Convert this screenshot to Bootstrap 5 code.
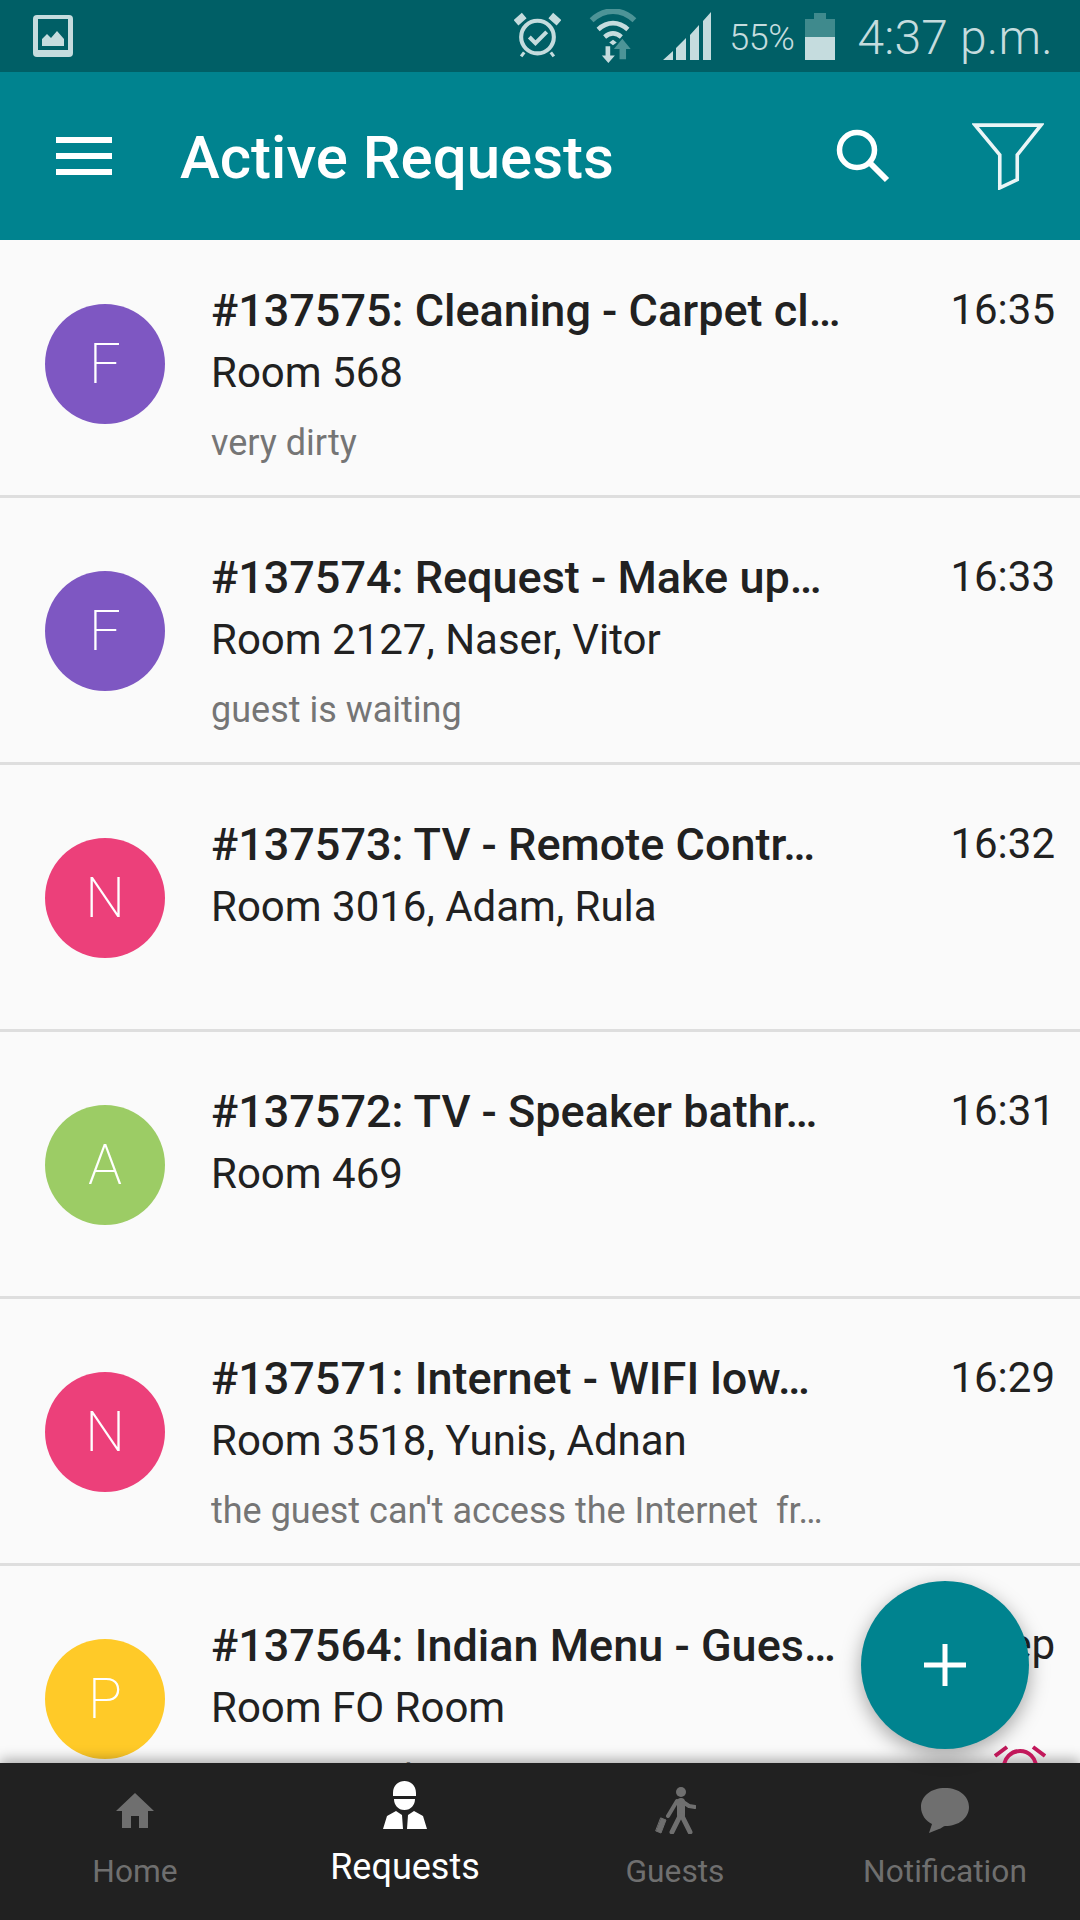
<!DOCTYPE html>
<html lang="en">
<head>
  <meta charset="UTF-8" />
  <meta name="viewport" content="width=device-width, initial-scale=1" />
  <title>Active Requests</title>
  <link href="https://cdn.jsdelivr.net/npm/bootstrap@5.3.0/dist/css/bootstrap.min.css" rel="stylesheet" />
  <style>
    body {
      font-family: Roboto, "Liberation Sans", sans-serif;
      background: #fafafa;
    }

    .phone {
      height: 1920px;
      overflow: hidden;
      position: relative;
    }

    .status-bar {
      height: 72px;
      background: #005f66;
      color: #c5dcde;
      padding: 0 27px 0 33px;
    }

    .status-wifi { margin-left: 27px; }
    .status-signal { margin-left: 25px; }
    .status-pct { font-size: 36px; font-weight: 300; margin: 3px 0 0 18px; letter-spacing: -.5px; line-height: 1; }
    .status-batt { margin-left: 11px; }
    .status-time { font-size: 48px; font-weight: 300; margin: 3px 0 0 22px; letter-spacing: .2px; line-height: 1; }

    .app-bar {
      height: 168px;
      background: #00838f;
      color: #fff;
      padding: 0 36px 0 56px;
    }

    .app-title {
      font-size: 60px;
      font-weight: 500;
      margin: 4px 0 0 68px;
      line-height: 1;
    }

    .app-filter { margin-left: 82px; }

    .burger { width: 56px; height: 38px; }
    .burger span { display: block; height: 6px; background: #fff; margin-bottom: 10px; }

    .req-list {
      --bs-list-group-bg: #fafafa;
      --bs-list-group-border-color: #dedede;
      --bs-list-group-border-width: 3px;
      --bs-list-group-item-padding-x: 0;
      --bs-list-group-item-padding-y: 0;
      flex: 1 1 0;
      min-height: 0;
      overflow: hidden;
    }

    .req-row {
      height: 267px;
      flex: none;
      padding: 9px 25px 0 45px !important;
    }

    .req-row:first-child {
      height: 258px;
      padding-top: 0 !important;
    }

    .avatar {
      width: 120px;
      height: 120px;
      margin-top: 64px;
      font-size: 56px;
      font-weight: 200;
      color: #fff;
    }

    .req-body { width: 640px; margin-left: 46px; padding-top: 45px; }
    .req-title, .req-room, .req-note { white-space: pre; overflow: hidden; }
    .req-title { font-size: 45px; font-weight: 500; color: #212121; line-height: 52px; }
    .req-room { font-size: 42px; color: #212121; line-height: 52px; margin-top: 10px; }
    .req-note { font-size: 36px; color: #757575; line-height: 44px; margin-top: 22px; height: 44px; }
    .req-time { font-size: 42px; color: #212121; line-height: 52px; margin-top: 44px; margin-left: auto; }

    .bg-purple { background: #7e57c2; }
    .bg-pink { background: #ec407a; }
    .bg-green { background: #9ccc65; }
    .bg-amber { background: #ffca28; }

    .tab-bar {
      height: 157px;
      background: #212121;
      box-shadow: 0 -4px 12px rgba(0, 0, 0, .3);
      position: relative;
    }

    .tab-item {
      width: 270px;
      color: #6f6f6f;
      font-size: 31.700px;
      height: 157px;
    }

    .tab-icon { height: 70px; margin-top: 12px; }
    .tab-text { margin-top: 6px; line-height: 42px; }
    .tab-item.is-active { color: #fff; font-size: 36px; }
    .tab-item.is-active .tab-icon { height: 60px; }
    .tab-item.is-active .tab-text { margin-top: 11px; }

    .fab {
      position: absolute;
      left: 861px;
      top: 1581px;
      width: 168px;
      height: 168px;
      background: #00838f;
      box-shadow: 0 6px 20px rgba(0, 0, 0, .35);
    }

    .alarm-mark {
      position: absolute;
      left: 994px;
      top: 1745px;
    }
  </style>
</head>
<body>
  <div class="phone d-flex flex-column">
    <!-- status bar -->
    <div class="status-bar d-flex align-items-center flex-shrink-0">
      <svg width="40" height="42" viewBox="0 0 40 42">
        <rect width="40" height="42" rx="4" fill="#c5dcde"/>
        <rect x="5" y="4" width="30" height="31" fill="#005f66"/>
        <path d="M9 31v-7l5-5 4 4 6-7 7 8v7z" fill="#c5dcde"/>
      </svg>
      <div class="ms-auto d-flex align-items-center">
        <svg width="47" height="48" viewBox="2 2 46 46" fill="none" stroke="#c5dcde">
          <circle cx="25" cy="26" r="16" stroke-width="4"/>
          <path d="M17 26l6 6 11-11" stroke-width="4"/>
          <path d="M4 12l8-7M46 12l-8-7" stroke-width="7"/>
          <path d="M12 41l-3 4M38 41l3 4" stroke-width="3"/>
        </svg>
        <svg class="status-wifi" width="50" height="54" viewBox="0 0 52 58" fill="none">
          <path d="M3 12c14-13 32-13 46 0" stroke="#4d9497" stroke-width="6"/>
          <path d="M10 22c10-9 22-9 32 0M17 30c6-5 12-5 18 0" stroke="#c5dcde" stroke-width="5"/>
          <path d="M22 36l4-3 4 3-4 3z" fill="#c5dcde"/>
          <path d="M18 40h5v10h5l-7 8-7-8h4z" fill="#c5dcde"/>
          <path d="M36 32l9 11h-5v11h-7V43h-6z" fill="#4d9497"/>
        </svg>
        <svg class="status-signal" width="48" height="48" viewBox="0 0 48 48" fill="#c5dcde">
          <path d="M0 48l10-9v9zM13 36l10-10v22H13zM27 23l9-10v35h-9zM40 9l8-9v48h-8z"/>
        </svg>
        <span class="status-pct">55%</span>
        <svg class="status-batt" width="30" height="47" viewBox="0 0 30 47">
          <path d="M9 0h12v6h9v20H0V6h9z" fill="#3f8a8d"/>
          <rect y="24" width="30" height="23" fill="#c5dcde"/>
        </svg>
        <span class="status-time">4:37 p.m.</span>
      </div>
    </div>

    <!-- toolbar -->
    <div class="app-bar d-flex align-items-center flex-shrink-0">
      <div class="burger"><span></span><span></span><span></span></div>
      <div class="app-title">Active Requests</div>
      <svg class="ms-auto" width="54" height="54" viewBox="0 0 54 54" fill="none" stroke="#fff">
        <circle cx="21" cy="21" r="17.500" stroke-width="5.500"/>
        <path d="M33 33l18 18" stroke-width="6"/>
      </svg>
      <svg class="app-filter" width="72" height="68" viewBox="0 0 70 66" fill="none" stroke="#eaf5f6" stroke-width="3.500">
        <path d="M3 3h64L44 32v24l-17 8V32z"/>
      </svg>
    </div>

    <!-- requests -->
    <div class="list-group list-group-flush req-list">
      <div class="list-group-item req-row d-flex">
        <div class="avatar bg-purple rounded-circle d-flex align-items-center justify-content-center flex-shrink-0">F</div>
        <div class="req-body">
          <div class="req-title">#137575: Cleaning - Carpet cl…</div>
          <div class="req-room">Room 568</div>
          <div class="req-note">very dirty</div>
        </div>
        <div class="req-time">16:35</div>
      </div>
      <div class="list-group-item req-row d-flex">
        <div class="avatar bg-purple rounded-circle d-flex align-items-center justify-content-center flex-shrink-0">F</div>
        <div class="req-body">
          <div class="req-title">#137574: Request - Make up…</div>
          <div class="req-room">Room 2127, Naser, Vitor</div>
          <div class="req-note">guest is waiting</div>
        </div>
        <div class="req-time">16:33</div>
      </div>
      <div class="list-group-item req-row d-flex">
        <div class="avatar bg-pink rounded-circle d-flex align-items-center justify-content-center flex-shrink-0">N</div>
        <div class="req-body">
          <div class="req-title">#137573: TV - Remote Contr…</div>
          <div class="req-room">Room 3016, Adam, Rula</div>
          <div class="req-note"></div>
        </div>
        <div class="req-time">16:32</div>
      </div>
      <div class="list-group-item req-row d-flex">
        <div class="avatar bg-green rounded-circle d-flex align-items-center justify-content-center flex-shrink-0">A</div>
        <div class="req-body">
          <div class="req-title">#137572: TV - Speaker bathr…</div>
          <div class="req-room">Room 469</div>
          <div class="req-note"></div>
        </div>
        <div class="req-time">16:31</div>
      </div>
      <div class="list-group-item req-row d-flex">
        <div class="avatar bg-pink rounded-circle d-flex align-items-center justify-content-center flex-shrink-0">N</div>
        <div class="req-body">
          <div class="req-title">#137571: Internet - WIFI low…</div>
          <div class="req-room">Room 3518, Yunis, Adnan</div>
          <div class="req-note">the guest can't access the Internet  fr…</div>
        </div>
        <div class="req-time">16:29</div>
      </div>
      <div class="list-group-item req-row d-flex">
        <div class="avatar bg-amber rounded-circle d-flex align-items-center justify-content-center flex-shrink-0">P</div>
        <div class="req-body">
          <div class="req-title">#137564: Indian Menu - Gues…</div>
          <div class="req-room">Room FO Room</div>
          <div class="req-note">no sauces please</div>
        </div>
        <div class="req-time">2 Sep</div>
      </div>
    </div>

    <!-- bottom tabs -->
    <div class="tab-bar d-flex flex-shrink-0">
      <div class="tab-item d-flex flex-column align-items-center">
        <div class="tab-icon d-flex align-items-center justify-content-center">
          <svg width="38" height="35" viewBox="0 0 38 35" fill="#6f6f6f"><path d="M19 0l19 18h-6v17h-9V23h-8v12H6V18H0z"/></svg>
        </div>
        <div class="tab-text">Home</div>
      </div>
      <div class="tab-item is-active d-flex flex-column align-items-center">
        <div class="tab-icon d-flex align-items-center justify-content-center">
          <svg width="44" height="48" viewBox="0 0 44 48" fill="#fff"><path d="M10 12C10-4 33-4 33 12v3H10zM11 18h21c0 6-4 11-10.500 11S11 24 11 18zM13 30l6 4 1 14H0l4-13zM31 30l-6 4-1 14h20l-4-13z"/></svg>
        </div>
        <div class="tab-text">Requests</div>
      </div>
      <div class="tab-item d-flex flex-column align-items-center">
        <div class="tab-icon d-flex align-items-center justify-content-center">
          <svg width="41" height="48" viewBox="0 0 41 48" fill="#6f6f6f" stroke="#6f6f6f" stroke-linecap="round" stroke-linejoin="round">
            <circle cx="26" cy="6" r="5" stroke="none"/>
            <path d="M26 16v13" stroke-width="8" fill="none"/>
            <path d="M28 16l6 4 6 1M22 15l-9 15" stroke-width="4" fill="none"/>
            <path d="M25 30l-8 16M27 30l8 16" stroke-width="5" fill="none"/>
            <path d="M6 32l5 2-5 13-5-2z" stroke-width="1"/>
          </svg>
        </div>
        <div class="tab-text">Guests</div>
      </div>
      <div class="tab-item d-flex flex-column align-items-center">
        <div class="tab-icon d-flex align-items-center justify-content-center">
          <svg width="48" height="45" viewBox="0 0 48 45" fill="#6f6f6f"><path d="M24 0c14 0 24 8 24 19s-10 19-24 19c-2 0-4 3-6 3L8 45l3-9C5 33 0 27 0 19 0 8 10 0 24 0z"/></svg>
        </div>
        <div class="tab-text">Notification</div>
      </div>
    </div>

    <!-- alarm badge behind the tab bar -->
    <svg class="alarm-mark" width="52" height="18" viewBox="0 0 52 18" fill="none" stroke="#c2185b" stroke-width="4">
      <path d="M1 11l12-9M51 11L39 2"/>
      <circle cx="26" cy="22" r="16"/>
    </svg>

    <button class="fab btn rounded-circle border-0 d-flex align-items-center justify-content-center p-0" type="button" aria-label="Add">
      <svg width="42" height="42" viewBox="0 0 42 42" fill="#fff"><path d="M18.500 0h5v18.500H42v5H23.500V42h-5V23.500H0v-5h18.500z"/></svg>
    </button>
  </div>

  <script src="https://cdn.jsdelivr.net/npm/bootstrap@5.3.0/dist/js/bootstrap.bundle.min.js"></script>
</body>
</html>
